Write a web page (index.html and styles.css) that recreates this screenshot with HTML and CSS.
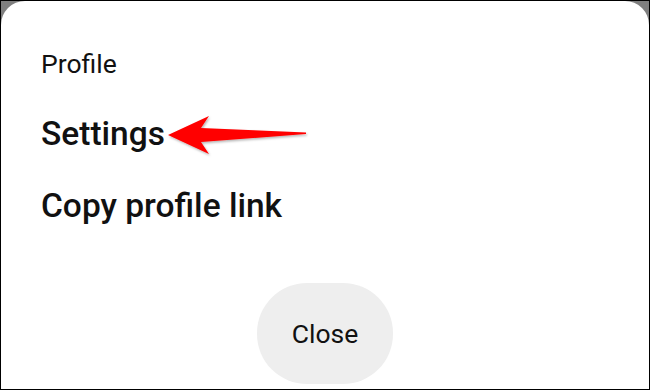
FILE: index.html
```html
<!DOCTYPE html>
<html lang="en">
<head>
<meta charset="utf-8">
<title>Profile menu</title>
<link rel="stylesheet" href="styles.css">
</head>
<body>
<div class="frame">
  <div class="sheet">
    <div class="title">Profile</div>
    <div class="item">Settings</div>
    <div class="item">Copy profile link</div>
    <div class="actions">
      <button class="close-btn" type="button">Close</button>
    </div>
    <svg class="arrow" width="150" height="50" viewBox="0 0 150 50" aria-hidden="true">
      <defs>
        <filter id="sh" x="-10%" y="-30%" width="120%" height="160%">
          <feDropShadow dx="1" dy="1.5" stdDeviation="1.2" flood-color="#000" flood-opacity="0.3"/>
        </filter>
      </defs>
      <path d="M6 25 L47 6 L39 18 L144 22.5 L144 24 L39 32 L47 44 Z" fill="#f00" filter="url(#sh)"/>
    </svg>
  </div>
</div>
</body>
</html>
```
FILE: styles.css
```css
* { box-sizing: border-box; }
html, body { margin: 0; padding: 0; }
body {
  width: 650px;
  height: 390px;
  font-family: Roboto, "Noto Sans", "Liberation Sans", sans-serif;
  color: #111;
}
.frame {
  width: 650px;
  height: 390px;
  border: 1px solid #000;
  background: #7f7f7f;
}
.sheet {
  position: relative;
  height: 100%;
  background: #fff;
  border-radius: 24px 24px 0 0;
  padding: 43px 0 0 40px;
  display: flex;
  flex-direction: column;
}
.title {
  font-size: 26.5px;
  line-height: 40px;
  font-weight: 400;
  margin-bottom: 14px;
}
.item {
  font-size: 33.5px;
  line-height: 72px;
  font-weight: 500;
}
.actions {
  display: flex;
  justify-content: center;
  margin-top: 41px;
  margin-left: -40px;
}
.close-btn {
  width: 136px;
  height: 101px;
  border: none;
  border-radius: 50px;
  background: #eeeeee;
  font-family: inherit;
  font-size: 26.5px;
  line-height: 30px;
  color: #111;
  padding: 0;
}
.arrow {
  position: absolute;
  left: 161px;
  top: 109px;
}
```
